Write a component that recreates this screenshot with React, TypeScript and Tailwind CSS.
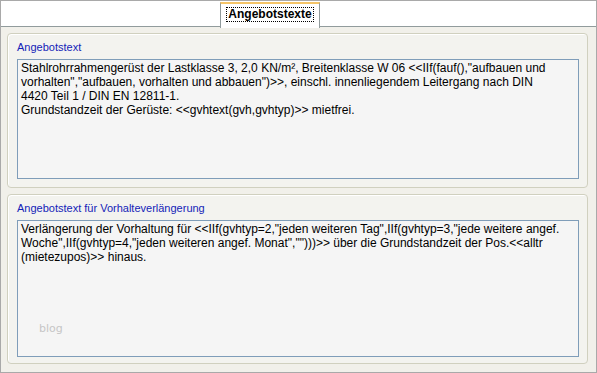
import React from "react";

const t1 = [
  "Stahlrohrrahmengerüst der Lastklasse 3, 2,0 KN/m², Breitenklasse W 06 <<IIf(fauf(),\"aufbauen und",
  "vorhalten\",\"aufbauen, vorhalten und abbauen\")>>, einschl. innenliegendem Leitergang nach DIN",
  "4420 Teil 1 / DIN EN 12811-1.",
  "Grundstandzeit der Gerüste: <<gvhtext(gvh,gvhtyp)>> mietfrei.",
];

const t2 = [
  "Verlängerung der Vorhaltung für <<IIf(gvhtyp=2,\"jeden weiteren Tag\",IIf(gvhtyp=3,\"jede weitere angef.",
  "Woche\",IIf(gvhtyp=4,\"jeden weiteren angef. Monat\",\"\")))>> über die Grundstandzeit der Pos.<<alltr",
  "(mietezupos)>> hinaus.",
];

function Group({
  label,
  lines,
  boxH,
  groupH,
  children,
}: {
  label: string;
  lines: string[];
  boxH: string;
  groupH: string;
  children?: React.ReactNode;
}) {
  return (
    <div
      className={`${groupH} ml-[6px] w-[581px] rounded-[4px] border border-[#d0d0bf] bg-[#f3f3ef] shadow-[inset_1px_1px_0_#ffffff] flex flex-col pl-[9px] pt-[7px]`}
    >
      <div
        className="text-[11px] leading-[13px] text-[#1323b8] h-[18px]"
        style={{ fontFamily: '"Liberation Sans", Arial, sans-serif' }}
      >
        {label}
      </div>
      <div
        className={`${boxH} relative w-[562px] border border-[#7f9db9] bg-[#f5f5f5] pl-[3px] pt-[1px] text-[12px] leading-[14px] text-[#000000] whitespace-pre`}
        style={{ fontFamily: '"Liberation Sans", Arial, sans-serif' }}
      >
        {lines.map((l, i) => (
          <div key={i}>{l}</div>
        ))}
        {children}
      </div>
    </div>
  );
}

export default function App() {
  return (
    <div className="w-[597px] h-[373px] border border-[#a9a9a9] bg-[#f1f0ea] flex flex-col overflow-hidden">
      <div className="h-[26px] bg-white border-b border-[#919b9c] flex shrink-0">
        <div className="w-[219px]" />
        <div className="w-[100px] mt-px -mb-px h-[26px] bg-white border-x border-[#919b9c] border-t-[2px] border-t-[#f5c568] flex items-start justify-center pt-[3px]">
          <span
            className="border border-dotted border-black px-px text-[12px] leading-[13px] font-bold text-black"
            style={{ fontFamily: '"Liberation Sans", Arial, sans-serif' }}
          >
            Angebotstexte
          </span>
        </div>
      </div>
      <div className="flex flex-col pt-[6px] gap-[6px]">
        <Group label="Angebotstext" lines={t1} boxH="h-[120px]" groupH="h-[155px]" />
        <Group
          label="Angebotstext für Vorhalteverlängerung"
          lines={t2}
          boxH="h-[137px]"
          groupH="h-[170px]"
        >
          <span
            className="absolute left-[21px] top-[101px] text-[11px] text-[#c6c6c6]"
            style={{ fontFamily: '"DejaVu Sans", Verdana, sans-serif' }}
          >
            blog
          </span>
        </Group>
      </div>
    </div>
  );
}
